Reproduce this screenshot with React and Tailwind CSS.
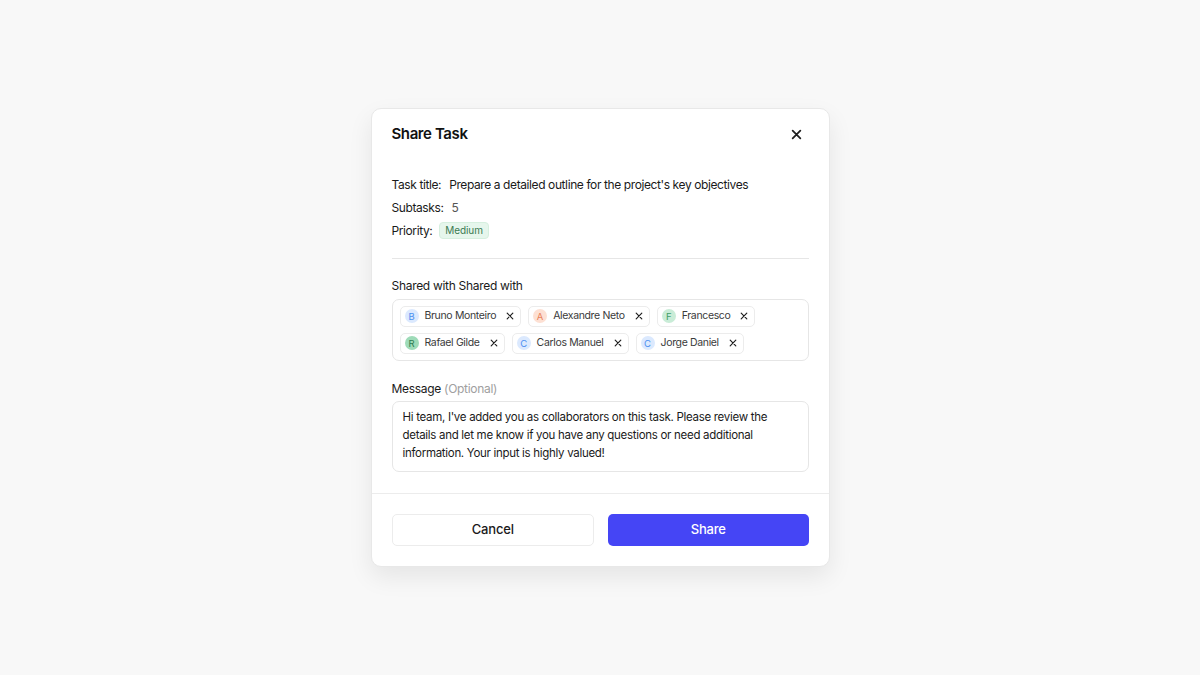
import React from 'react';

const people = [
  { name: 'Bruno Monteiro', letter: 'B', tone: 'bg-[#dbe9fe] text-[#4b8ef0]' },
  { name: 'Alexandre Neto', letter: 'A', tone: 'bg-[#fde0d3] text-[#e9825a]' },
  { name: 'Francesco', letter: 'F', tone: 'bg-[#c9ecd7] text-[#3f9d68]' },
  { name: 'Rafael Gilde', letter: 'R', tone: 'bg-[#9edbb8] text-[#2f7c51]' },
  { name: 'Carlos Manuel', letter: 'C', tone: 'bg-[#dbe9fe] text-[#4b8ef0]' },
  { name: 'Jorge Daniel', letter: 'C', tone: 'bg-[#dbe9fe] text-[#4b8ef0]' },
];

function XIcon({ size = 10, stroke = 1.8 }) {
  return (
    <svg width={size} height={size} viewBox="0 0 10 10" fill="none">
      <path d="M1.5 1.5L8.5 8.5M8.5 1.5L1.5 8.5" stroke="#1f1f1f" strokeWidth={stroke} strokeLinecap="round" />
    </svg>
  );
}

function Chip({ person }) {
  return (
    <div className="flex items-center h-[21px] pl-[4px] pr-[6px] border border-[#ececec] rounded-[5px] bg-white">
      <span className={`w-[14px] h-[14px] rounded-full flex items-center justify-center text-[9.5px] leading-none ${person.tone}`}>
        {person.letter}
      </span>
      <span className="ml-[6px] text-[10.5px] text-[#3a3a3a] tracking-[-0.35px]">{person.name}</span>
      <span className="ml-[10px] flex items-center">
        <XIcon size={8} stroke={1.5} />
      </span>
    </div>
  );
}

export default function App() {
  return (
    <div className="w-[1200px] h-[675px] bg-[#f8f8f8] flex items-center justify-center font-['Inter',sans-serif]">
      <div className="w-[459px] bg-white rounded-[10px] border border-[#e8e8e8] shadow-[0_10px_25px_rgba(0,0,0,0.08)]">
        <div className="flex items-center justify-between pl-[20px] pr-[27px] pt-[14px] pb-[15px]">
          <h2 className="text-[15px] font-semibold text-[#111] tracking-[-0.4px]">Share Task</h2>
          <XIcon size={11} stroke={1.6} />
        </div>

        <div className="px-[20px] pt-[15px]">
          <div className="flex flex-col gap-[5px] text-[12px] text-[#1a1a1a] tracking-[-0.4px]">
            <div className="flex items-center h-[18px]">
              <span>Task title:</span>
              <span className="ml-[8px]">Prepare a detailed outline for the project's key objectives</span>
            </div>
            <div className="flex items-center h-[18px]">
              <span>Subtasks:</span>
              <span className="ml-[8px] text-[#555]">5</span>
            </div>
            <div className="flex items-center h-[18px]">
              <span>Priority:</span>
              <span className="ml-[7px] px-[5px] h-[17px] flex items-center rounded-[4px] bg-[#e6f6ec] border border-[#d6efdf] text-[10px] text-[#3b7a52] tracking-[-0.1px]">Medium</span>
            </div>
          </div>

          <div className="h-px bg-[#e6e6e6] mt-[18px]" />

          <div className="mt-[18px] text-[12px] text-[#1a1a1a] tracking-[-0.3px]">Shared with Shared with</div>
          <div className="mt-[4px] border border-[#e6e6e6] rounded-[7px] px-[7px] pt-[6px] pb-[6px] flex flex-wrap gap-x-[7px] gap-y-[6px]">
            {people.map((p, i) => (
              <Chip key={i} person={p} />
            ))}
          </div>

          <div className="mt-[19px] text-[12px] text-[#1a1a1a] tracking-[-0.3px]">
            Message <span className="text-[#a0a0a0]">(Optional)</span>
          </div>
          <div className="mt-[3px] border border-[#e6e6e6] rounded-[7px] px-[10px] pt-[6px] pb-[9px] text-[11.5px] leading-[18px] text-[#1a1a1a] tracking-[-0.3px]">
            Hi team, I've added you as collaborators on this task. Please review the details and let me know if you have any questions or need additional information. Your input is highly valued!
          </div>
        </div>

        <div className="h-px bg-[#ececec] mt-[21px]" />

        <div className="flex gap-[14px] px-[20px] pt-[20px] pb-[20px]">
          <button className="flex-1 h-[32px] rounded-[5px] border border-[#ececec] bg-white text-[13px] font-medium text-[#1a1a1a] tracking-[-0.2px]">Cancel</button>
          <button className="flex-1 h-[32px] rounded-[5px] bg-[#4545f5] text-[13px] font-medium text-white tracking-[-0.2px]">Share</button>
        </div>
      </div>
    </div>
  );
}
